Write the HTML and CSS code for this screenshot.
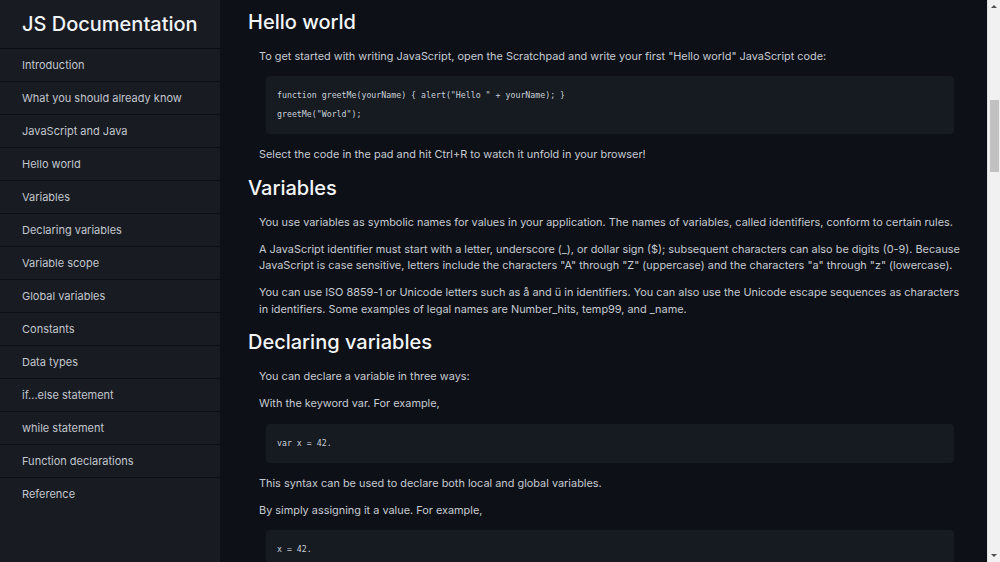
FILE: index.html
```html
<!DOCTYPE html>
<html lang="en">
<head>
<meta charset="utf-8">
<title>JS Documentation</title>
<link rel="stylesheet" href="styles.css">
</head>
<body>
<nav class="sidebar" id="navbar">
  <header class="sidebar-title">JS Documentation</header>
  <ul class="nav-list">
    <li><a class="nav-link" href="#Introduction">Introduction</a></li>
    <li><a class="nav-link" href="#What_you_should_already_know">What you should already know</a></li>
    <li><a class="nav-link" href="#JavaScript_and_Java">JavaScript and Java</a></li>
    <li><a class="nav-link" href="#Hello_world">Hello world</a></li>
    <li><a class="nav-link" href="#Variables">Variables</a></li>
    <li><a class="nav-link" href="#Declaring_variables">Declaring variables</a></li>
    <li><a class="nav-link" href="#Variable_scope">Variable scope</a></li>
    <li><a class="nav-link" href="#Global_variables">Global variables</a></li>
    <li><a class="nav-link" href="#Constants">Constants</a></li>
    <li><a class="nav-link" href="#Data_types">Data types</a></li>
    <li><a class="nav-link" href="#if...else_statement">if...else statement</a></li>
    <li><a class="nav-link" href="#while_statement">while statement</a></li>
    <li><a class="nav-link" href="#Function_declarations">Function declarations</a></li>
    <li><a class="nav-link" href="#Reference">Reference</a></li>
  </ul>
</nav>
<main class="main" id="main-doc">
  <section class="doc-section" id="Introduction">
    <h2 class="section-title">Introduction</h2>
    <article class="section-body">
      <p>JavaScript is a cross-platform, object-oriented scripting language. It is a small and lightweight language. Inside a host environment (for example, a web browser), JavaScript can be connected to the objects of its environment to provide programmatic control over them.</p>
      <p>JavaScript contains a standard library of objects, such as Array, Date, and Math, and a core set of language elements such as operators, control structures, and statements. Core JavaScript can be extended for a variety of purposes by supplementing it with additional objects; for example:</p>
      <ul>
        <li>Client-side JavaScript extends the core language by supplying objects to control a browser and its Document Object Model (DOM). For example, client-side extensions allow an application to place elements on an HTML form and respond to user events such as mouse clicks, form input, and page navigation.</li>
        <li>Server-side JavaScript extends the core language by supplying objects relevant to running JavaScript on a server. For example, server-side extensions allow an application to communicate with a database, provide continuity of information from one invocation to another of the application, or perform file manipulations on a server.</li>
      </ul>
    </article>
  </section>
  <section class="doc-section" id="What_you_should_already_know">
    <h2 class="section-title">What you should already know</h2>
    <article class="section-body">
      <p>This guide assumes you have the following basic background:</p>
      <ul>
        <li>A general understanding of the Internet and the World Wide Web (WWW).</li>
        <li>Good working knowledge of HyperText Markup Language (HTML).</li>
        <li>Some programming experience. If you are new to programming, try one of the tutorials linked on the main page about JavaScript.</li>
      </ul>
    </article>
  </section>
  <section class="doc-section" id="JavaScript_and_Java">
    <h2 class="section-title">JavaScript and Java</h2>
    <article class="section-body">
      <p>JavaScript and Java are similar in some ways but fundamentally different in some others. The JavaScript language resembles Java but does not have Java's static typing and strong type checking. JavaScript follows most Java expression syntax, naming conventions and basic control-flow constructs which was the reason why it was renamed from LiveScript to JavaScript.</p>
      <p>In contrast to Java's compile-time system of classes built by declarations, JavaScript supports a runtime system based on a small number of data types representing numeric, Boolean, and string values. JavaScript has a prototype-based object model instead of the more common class-based object model. The prototype-based model provides dynamic inheritance; that is, what is inherited can vary for individual objects. JavaScript also supports functions without any special declarative requirements. Functions can be properties of objects, executing as loosely typed methods.</p>
      <p>JavaScript is a very free-form language compared to Java. You do not have to declare all variables, classes, and methods. You do not have to be concerned with whether methods are public, private, or protected, and you do not have to implement interfaces. Variables, parameters, and function return types are not explicitly typed.</p>
    </article>
  </section>
  <section class="doc-section" id="Hello_world">
    <h2 class="section-title" id="hello-title">Hello world</h2>
    <article class="section-body">
      <p>To get started with writing JavaScript, open the Scratchpad and write your first "Hello world" JavaScript code:</p>
      <pre class="code"><code>function greetMe(yourName) { alert("Hello " + yourName); }
greetMe("World");</code></pre>
      <p>Select the code in the pad and hit Ctrl+R to watch it unfold in your browser!</p>
    </article>
  </section>
  <section class="doc-section" id="Variables">
    <h2 class="section-title">Variables</h2>
    <article class="section-body">
      <p>You use variables as symbolic names for values in your application. The names of variables, called identifiers, conform to certain rules.</p>
      <p>A JavaScript identifier must start with a letter, underscore (_), or dollar sign ($); subsequent characters can also be digits (0-9). Because JavaScript is case sensitive, letters include the characters "A" through "Z" (uppercase) and the characters "a" through "z" (lowercase).</p>
      <p>You can use ISO 8859-1 or Unicode letters such as å and ü in identifiers. You can also use the Unicode escape sequences as characters in identifiers. Some examples of legal names are Number_hits, temp99, and _name.</p>
    </article>
  </section>
  <section class="doc-section" id="Declaring_variables">
    <h2 class="section-title">Declaring variables</h2>
    <article class="section-body">
      <p>You can declare a variable in three ways:</p>
      <p>With the keyword var. For example,</p>
      <pre class="code"><code>var x = 42.</code></pre>
      <p>This syntax can be used to declare both local and global variables.</p>
      <p>By simply assigning it a value. For example,</p>
      <pre class="code"><code>x = 42.</code></pre>
      <p>This always declares a global variable. It generates a strict JavaScript warning. You shouldn't use this variant.</p>
      <p>With the keyword let. For example,</p>
      <pre class="code"><code>let y = 13.</code></pre>
      <p>This syntax can be used to declare a block scope local variable. See Variable scope below.</p>
    </article>
  </section>
  <section class="doc-section" id="Variable_scope">
    <h2 class="section-title">Variable scope</h2>
    <article class="section-body">
      <p>When you declare a variable outside of any function, it is called a global variable, because it is available to any other code in the current document. When you declare a variable within a function, it is called a local variable, because it is available only within that function.</p>
      <p>JavaScript before ECMAScript 2015 does not have block statement scope; rather, a variable declared within a block is local to the function (or global scope) that the block resides within. For example the following code will log 5, because the scope of x is the function (or global context) within which x is declared, not the block, which in this case is an if statement.</p>
      <pre class="code"><code>if (true) { var x = 5; } console.log(x); // 5</code></pre>
      <p>This behavior changes, when using the let declaration introduced in ECMAScript 2015.</p>
      <pre class="code"><code>if (true) { let y = 5; } console.log(y); // ReferenceError: y is not defined</code></pre>
    </article>
  </section>
  <section class="doc-section" id="Global_variables">
    <h2 class="section-title">Global variables</h2>
    <article class="section-body">
      <p>Global variables are in fact properties of the global object. In web pages the global object is window, so you can set and access global variables using the window.variable syntax.</p>
      <p>Consequently, you can access global variables declared in one window or frame from another window or frame by specifying the window or frame name. For example, if a variable called phoneNumber is declared in a document, you can refer to this variable from an iframe as parent.phoneNumber.</p>
    </article>
  </section>
  <section class="doc-section" id="Constants">
    <h2 class="section-title">Constants</h2>
    <article class="section-body">
      <p>You can create a read-only, named constant with the const keyword. The syntax of a constant identifier is the same as for a variable identifier: it must start with a letter, underscore or dollar sign and can contain alphabetic, numeric, or underscore characters.</p>
      <pre class="code"><code>const PI = 3.14;</code></pre>
      <p>A constant cannot change value through assignment or be re-declared while the script is running. It has to be initialized to a value.</p>
      <p>The scope rules for constants are the same as those for let block scope variables. If the const keyword is omitted, the identifier is assumed to represent a variable.</p>
      <p>You cannot declare a constant with the same name as a function or variable in the same scope. For example:</p>
      <pre class="code"><code>// THIS WILL CAUSE AN ERROR
function f() {};
const f = 5;

// THIS WILL CAUSE AN ERROR ALSO
function f() {
  const g = 5;
  var g;

  //statements
}</code></pre>
      <p>However, object attributes are not protected, so the following statement is executed without problems.</p>
      <pre class="code"><code>const MY_OBJECT = {"key": "value"};
MY_OBJECT.key = "otherValue";</code></pre>
    </article>
  </section>
  <section class="doc-section" id="Data_types">
    <h2 class="section-title">Data types</h2>
    <article class="section-body">
      <p>The latest ECMAScript standard defines seven data types:</p>
      <ul>
        <li>Six data types that are primitives:
          <ul>
            <li>Boolean. true and false.</li>
            <li>null. A special keyword denoting a null value.</li>
            <li>undefined. A top-level property whose value is undefined.</li>
            <li>Number. 42 or 3.14159.</li>
            <li>String. "Howdy"</li>
            <li>Symbol (new in ECMAScript 2015). A data type whose instances are unique and immutable.</li>
          </ul>
        </li>
        <li>and Object</li>
      </ul>
      <p>Although these data types are a relatively small amount, they enable you to perform useful functions with your applications. Objects and functions are the other fundamental elements in the language.</p>
    </article>
  </section>
  <section class="doc-section" id="if...else_statement">
    <h2 class="section-title">if...else statement</h2>
    <article class="section-body">
      <p>Use the if statement to execute a statement if a logical condition is true. Use the optional else clause to execute a statement if the condition is false. An if statement looks as follows:</p>
      <pre class="code"><code>if (condition) {
  statement_1;
} else {
  statement_2;
}</code></pre>
      <p>condition can be any expression that evaluates to true or false. If condition evaluates to true, statement_1 is executed; otherwise, statement_2 is executed. statement_1 and statement_2 can be any statement, including further nested if statements.</p>
      <p>You may also compound the statements using else if to have multiple conditions tested in sequence, as follows:</p>
      <pre class="code"><code>if (condition_1) {
  statement_1;
} else if (condition_2) {
  statement_2;
} else if (condition_n) {
  statement_n;
} else {
  statement_last;
}</code></pre>
      <p>In the case of multiple conditions only the first logical condition which evaluates to true will be executed. To execute multiple statements, group them within a block statement ({ ... }) . In general, it's good practice to always use block statements, especially when nesting if statements.</p>
    </article>
  </section>
  <section class="doc-section" id="while_statement">
    <h2 class="section-title">while statement</h2>
    <article class="section-body">
      <p>A while statement executes its statements as long as a specified condition evaluates to true. A while statement looks as follows:</p>
      <pre class="code"><code>while (condition)
  statement</code></pre>
      <p>If the condition becomes false, statement within the loop stops executing and control passes to the statement following the loop.</p>
      <p>The condition test occurs before statement in the loop is executed. If the condition returns true, statement is executed and the condition is tested again. If the condition returns false, execution stops and control is passed to the statement following while.</p>
      <p>To execute multiple statements, use a block statement ({ ... }) to group those statements.</p>
      <p>Example:</p>
      <p>The following while loop iterates as long as n is less than three:</p>
      <pre class="code"><code>var n = 0;
var x = 0;
while (n &lt; 3) {
  n++;
  x += n;
}</code></pre>
      <p>With each iteration, the loop increments n and adds that value to x. Therefore, x and n take on the following values:</p>
      <ul>
        <li>After the first pass: n = 1 and x = 1</li>
        <li>After the second pass: n = 2 and x = 3</li>
        <li>After the third pass: n = 3 and x = 6</li>
      </ul>
      <p>After completing the third pass, the condition n &lt; 3 is no longer true, so the loop terminates.</p>
    </article>
  </section>
  <section class="doc-section" id="Function_declarations">
    <h2 class="section-title">Function declarations</h2>
    <article class="section-body">
      <p>A function definition (also called a function declaration, or function statement) consists of the function keyword, followed by:</p>
      <ul>
        <li>The name of the function.</li>
        <li>A list of arguments to the function, enclosed in parentheses and separated by commas.</li>
        <li>The JavaScript statements that define the function, enclosed in curly brackets, { }.</li>
      </ul>
      <p>For example, the following code defines a simple function named square:</p>
      <pre class="code"><code>function square(number) {
  return number * number;
}</code></pre>
      <p>The function square takes one argument, called number. The function consists of one statement that says to return the argument of the function (that is, number) multiplied by itself. The return statement specifies the value returned by the function.</p>
      <pre class="code"><code>return number * number;</code></pre>
      <p>Primitive parameters (such as a number) are passed to functions by value; the value is passed to the function, but if the function changes the value of the parameter, this change is not reflected globally or in the calling function.</p>
    </article>
  </section>
  <section class="doc-section" id="Reference">
    <h2 class="section-title">Reference</h2>
    <article class="section-body">
      <ul>
        <li>All the documentation in this page is taken from MDN</li>
      </ul>
    </article>
  </section>
</main>
<div class="scrollbar" aria-hidden="true">
  <span class="sb-arrow"><span class="sb-tri sb-tri-up"></span></span>
  <span class="sb-track"><span class="sb-thumb"></span></span>
  <span class="sb-arrow"><span class="sb-tri sb-tri-down"></span></span>
</div>
<script src="script.js"></script>
</body>
</html>
```

FILE: styles.css
```css
html, body {
  height: 100%;
}
body {
  margin: 0;
  display: flex;
  overflow: hidden;
  background: #0d1117;
  color: #c9d1d9;
  font-family: Inter, "Noto Sans", sans-serif;
}
.sidebar {
  flex: 0 0 220px;
  width: 220px;
  height: 100%;
  background: #181b22;
}
.sidebar-title {
  height: 48px;
  padding-left: 22px;
  display: flex;
  align-items: center;
  font-size: 20px;
  font-weight: 500;
  color: #f0f3f6;
  border-bottom: 1px solid #0b0d12;
}
.nav-list {
  list-style: none;
  margin: 0;
  padding: 0;
}
.nav-list li {
  border-bottom: 1px solid #0d0f13;
}
.nav-list li:last-child {
  border-bottom: none;
}
.nav-link {
  display: flex;
  align-items: center;
  height: 32px;
  padding-left: 22px;
  font-size: 11px;
  color: #c2c6cd;
  text-decoration: none;
}
.main {
  flex: 1;
  min-width: 0;
  height: 100%;
  overflow-y: scroll;
  padding: 0 26px 40px 28px;
  box-sizing: border-box;
}
.section-title {
  margin: 12px 0 13px;
  font-size: 20px;
  line-height: 26px;
  font-weight: 500;
  color: #f3f5f8;
}
.section-body {
  padding-left: 11px;
  font-size: 10.9px;
  line-height: 16.5px;
  color: #c6cad1;
}
.section-body p {
  margin: 10.5px 0;
}
.section-body p:first-child {
  margin-top: 0;
}
.section-body ul {
  margin: 10.5px 0;
  padding-left: 22px;
}
.section-body li {
  margin: 4px 0;
}
.code {
  margin: 12px 7px;
  padding: 10px 11px;
  background: #161a21;
  border-radius: 4px;
  font-family: "DejaVu Sans Mono", "Liberation Mono", monospace;
  font-size: 8.25px;
  line-height: 19px;
  color: #c9d1d9;
  white-space: pre-wrap;
}
.scrollbar {
  flex: 0 0 13px;
  width: 13px;
  height: 100%;
  display: flex;
  flex-direction: column;
  background: #f1f1f1;
  border-left: 1px solid #e4e4e4;
  box-sizing: border-box;
}
.sb-arrow {
  flex: 0 0 13px;
  display: flex;
  align-items: center;
  justify-content: center;
}
.sb-tri {
  width: 0;
  height: 0;
  border-left: 3px solid transparent;
  border-right: 3px solid transparent;
}
.sb-tri-up {
  border-bottom: 3px solid #505050;
}
.sb-tri-down {
  border-top: 3px solid #505050;
}
.sb-track {
  flex: 1;
  display: flex;
  flex-direction: column;
  align-items: center;
}
.sb-thumb {
  margin-top: 87px;
  width: 9px;
  height: 72px;
  background: #c1c1c1;
}
```

FILE: script.js
```js
(function () {
  var main = document.getElementById('main-doc');
  function place() {
    var title = document.getElementById('hello-title');
    var delta = title.getBoundingClientRect().top - main.getBoundingClientRect().top;
    main.scrollTop = main.scrollTop + delta - 9;
  }
  place();
  window.addEventListener('load', place);
})();
```
